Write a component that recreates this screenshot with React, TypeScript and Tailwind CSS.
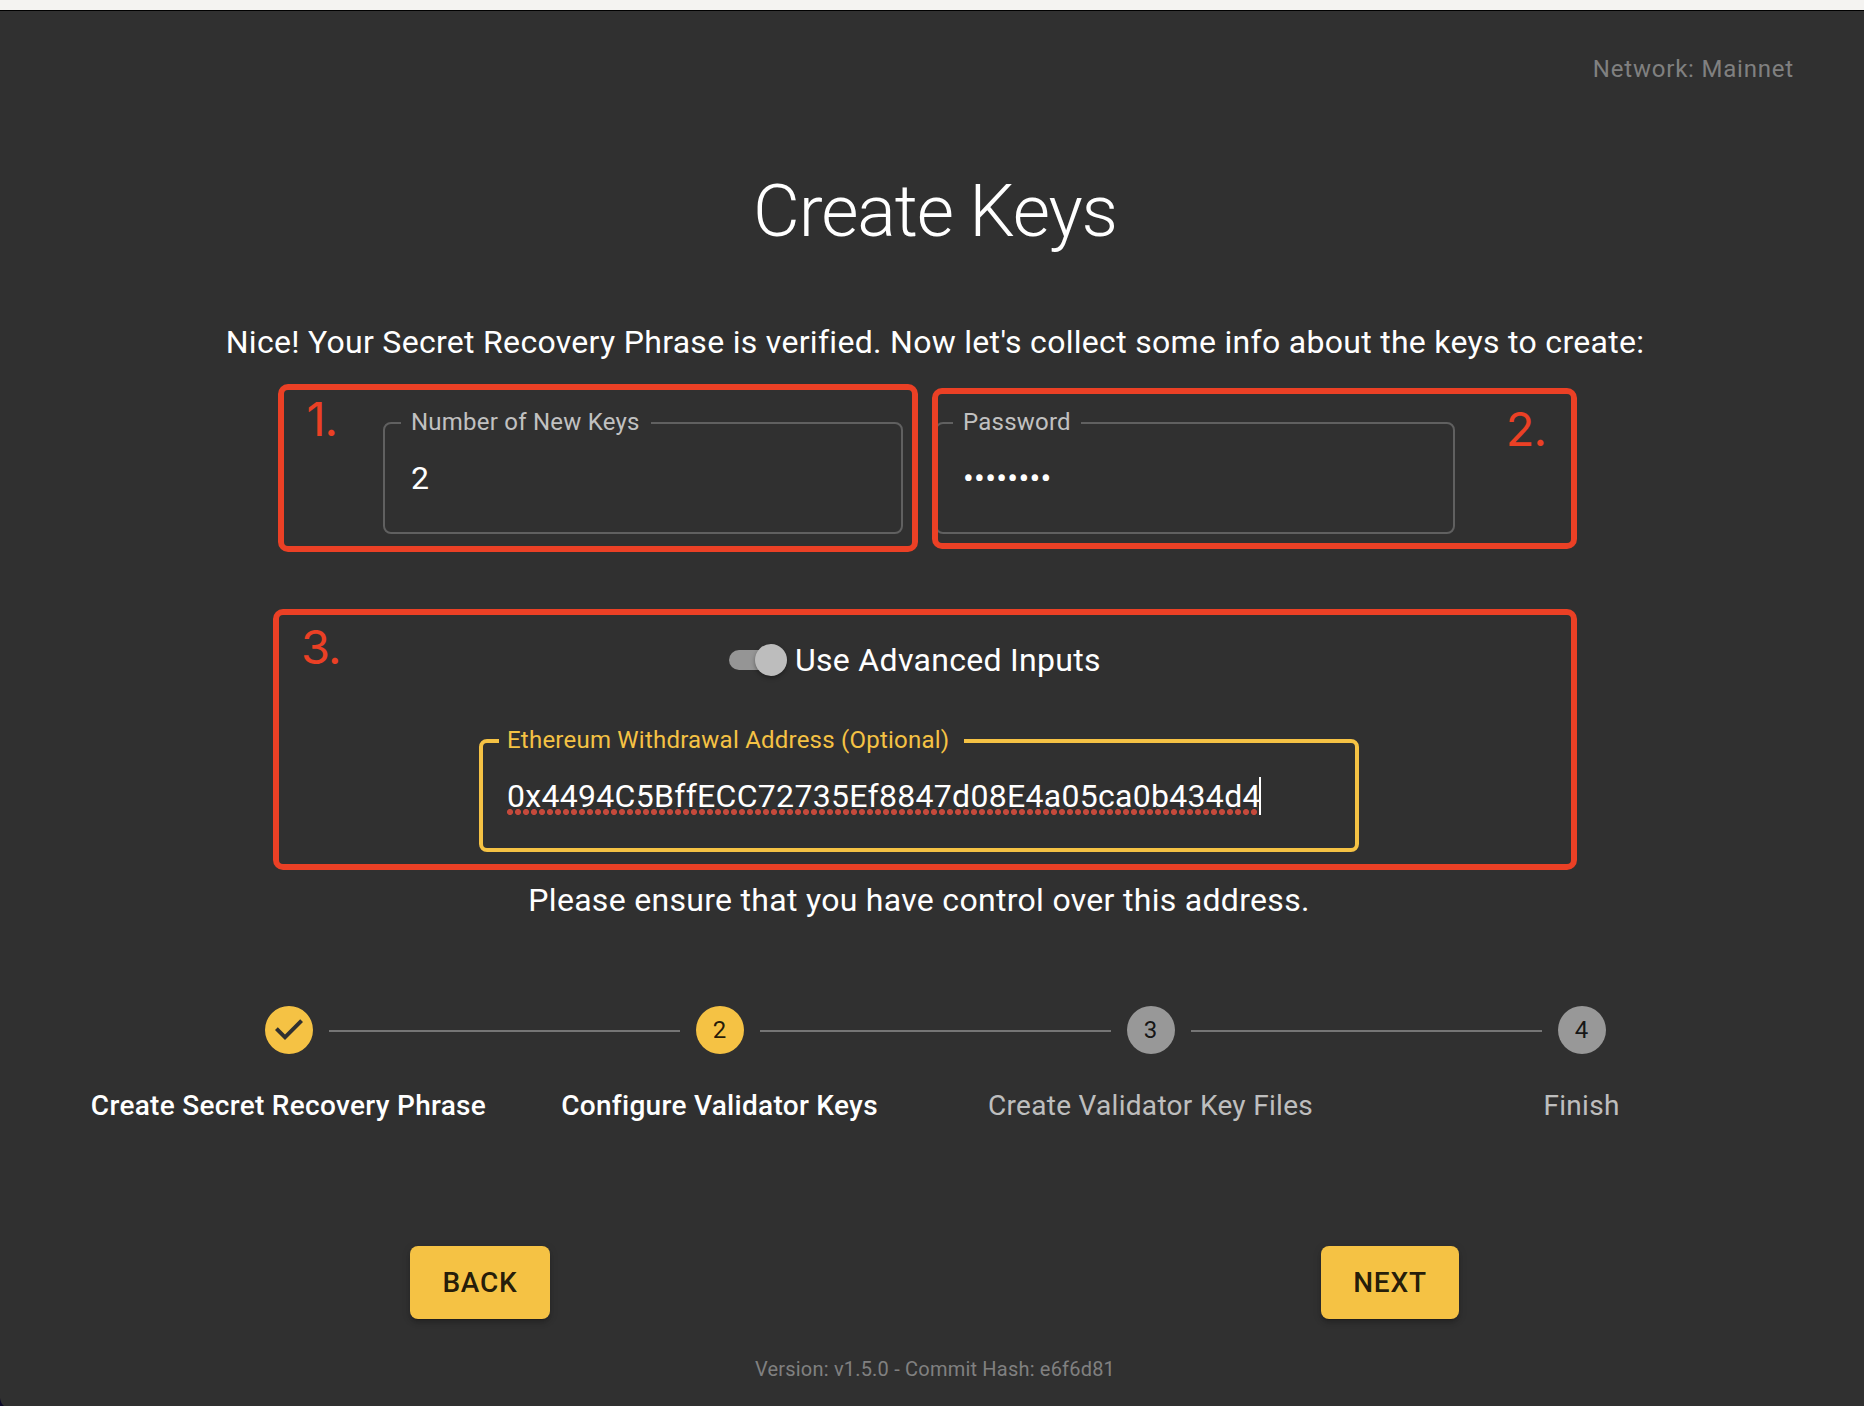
import type { ReactNode } from "react";

function OutlinedField({
  label,
  className,
  labelClassName,
  children,
}: {
  label: string;
  className: string;
  labelClassName: string;
  children: ReactNode;
}) {
  return (
    <div className={`relative flex items-center rounded-lg ${className}`}>
      <span className={`absolute bg-[#303030] text-[24px] leading-7 tracking-[0.225px] whitespace-nowrap ${labelClassName}`}>
        {label}
      </span>
      {children}
    </div>
  );
}

function Annotation({ className, children }: { className: string; children: ReactNode }) {
  return (
    <div
      className={`absolute rounded-[10px] border-[6px] border-[#eb4025] font-['Inter',sans-serif] text-[47px] leading-[48px] font-normal tracking-[-1px] text-[#eb4025] ${className}`}
    >
      {children}
    </div>
  );
}

const steps = [
  { label: "Create Secret Recovery Phrase", state: "done" },
  { label: "Configure Validator Keys", state: "active" },
  { label: "Create Validator Key Files", state: "todo" },
  { label: "Finish", state: "todo" },
];

function StepIcon({ index, state }: { index: number; state: string }) {
  if (state === "done") {
    return (
      <svg viewBox="0 0 24 24" className="size-12 shrink-0 fill-[#f5c244]">
        <path d="M12 0a12 12 0 1 0 0 24 12 12 0 0 0 0-24zm-2 17l-5-5 1.4-1.4 3.6 3.6 7.6-7.6L19 8l-9 9z" />
      </svg>
    );
  }
  return (
    <div
      className={`flex size-12 shrink-0 items-center justify-center rounded-full text-[24px] leading-none text-black/87 ${
        state === "active" ? "bg-[#f5c244]" : "bg-[#989898]"
      }`}
    >
      {index + 1}
    </div>
  );
}

function Stepper() {
  return (
    <div className="mx-auto mt-[82px] grid w-[1724px] grid-cols-4">
      {steps.map((step, i) => (
        <div key={step.label} className="flex flex-col items-center">
          <div className="flex w-full items-center gap-4">
            <div className={`mt-0.5 h-0.5 flex-1 ${i === 0 ? "" : "bg-[#757575]"}`} />
            <StepIcon index={i} state={step.state} />
            <div className={`mt-0.5 h-0.5 flex-1 ${i === steps.length - 1 ? "" : "bg-[#757575]"}`} />
          </div>
          <div
            className={`mt-8 text-[28px] leading-10 tracking-[0.3px] whitespace-nowrap ${
              step.state === "todo" ? "text-white/70" : "font-medium text-white"
            }`}
          >
            {step.label}
          </div>
        </div>
      ))}
    </div>
  );
}

function ActionButton({ className, children }: { className: string; children: ReactNode }) {
  return (
    <button
      className={`h-[73px] rounded-lg bg-[#f5c244] text-[28px] font-medium tracking-[0.8px] text-black/87 shadow-[0_3px_1px_-2px_rgba(0,0,0,0.2),0_4px_4px_0_rgba(0,0,0,0.14),0_2px_10px_0_rgba(0,0,0,0.12)] ${className}`}
    >
      {children}
    </button>
  );
}

export default function App() {
  return (
    <div className="relative h-[1406px] w-[1864px] overflow-hidden bg-[#303030] font-['Roboto',sans-serif] text-white">
      <div className="h-[11px] border-b border-black bg-[#f4f3f1]" />
      <div className="flex w-[1870px] flex-col">
        <header className="flex justify-end pt-10 pr-[76px] text-[24px] leading-9 tracking-[0.8px] text-[#808080]">
          Network: Mainnet
        </header>
        <h1 className="mt-[83px] text-center text-[72px] leading-[84px] font-light tracking-[-1.125px]">Create Keys</h1>
        <p className="mt-16 text-center text-[32px] leading-[48px] tracking-[0.3px]">
          Nice! Your Secret Recovery Phrase is verified. Now let's collect some info about the keys to create:
        </p>

        <section className="relative mt-14 ml-[383px] flex w-[1072px] justify-between">
          <OutlinedField
            label="Number of New Keys"
            className="h-28 w-[520px] border-2 border-[#606060] pl-[26px]"
            labelClassName="-top-4 left-4 pr-[11px] pl-[10px] text-[#c1c1c1]"
          >
            <span className="text-[32px] leading-[38px]">2</span>
          </OutlinedField>
          <OutlinedField
            label="Password"
            className="h-28 w-[520px] border-2 border-[#606060] pl-[26px]"
            labelClassName="-top-4 left-4 pr-[10px] pl-[10px] text-[#c1c1c1]"
          >
            <span className="text-[32px] leading-[38px] tracking-[0.28px]">••••••••</span>
          </OutlinedField>
          <Annotation className="-top-[38px] -left-[105.5px] h-[168px] w-[640.5px] pt-[5px] pl-[23px]">1.</Annotation>
          <Annotation className="-top-[34px] left-[549px] h-[161px] w-[645px] pt-[11px] pr-[25px] text-right">2.</Annotation>
        </section>

        <section className="relative mt-[110px] ml-[479px] w-[880px]">
          <div className="flex h-8 items-center pl-[250px]">
            <div className="flex h-5 w-[52px] items-center rounded-full bg-[#959595]">
              <div className="ml-[26px] size-8 shrink-0 rounded-full bg-[#bdbdbd] shadow-[0_2px_4px_rgba(0,0,0,0.35)]" />
            </div>
            <span className="ml-[14px] text-[32px] leading-[48px] tracking-[0.3px]">Use Advanced Inputs</span>
          </div>
          <OutlinedField
            label="Ethereum Withdrawal Address (Optional)"
            className="mt-[63px] h-[113px] w-full border-4 border-[#f5c244] pl-6"
            labelClassName="-top-[17px] left-4 pr-[15px] pl-2 text-[#f5c244]"
          >
            <span className="relative text-[32px] leading-[38px] tracking-[0.3px]">
              0x4494C5BffECC72735Ef8847d08E4a05ca0b434d4
              <span className="absolute bottom-0 left-0 h-[6px] w-full bg-[radial-gradient(circle_at_3px_3px,#c5493b_2.7px,transparent_3.3px)] bg-[length:8px_6px] bg-repeat-x" />
              <span className="absolute top-0 right-0 h-[38px] w-0.5 bg-white" />
            </span>
          </OutlinedField>
          <Annotation className="-top-[35px] -left-[206px] h-[261px] w-[1304px] pt-2 pl-[22px]">3.</Annotation>
        </section>
        <p className="mt-6 ml-[479px] w-[880px] text-center text-[32px] leading-[48px] tracking-[0.3px]">
          Please ensure that you have control over this address.
        </p>

        <Stepper />

        <div className="mt-[120px] ml-[410px] flex w-[1049px] justify-between">
          <ActionButton className="w-[140px]">BACK</ActionButton>
          <ActionButton className="w-[138px]">NEXT</ActionButton>
        </div>
        <footer className="mt-[35px] text-center text-[20px] leading-[30px] tracking-[0.2px] text-[#808080]">
          Version: v1.5.0 - Commit Hash: e6f6d81
        </footer>
      </div>
      <svg viewBox="0 0 4 8" className="absolute bottom-0 left-0 h-2 w-1 fill-[#0c0a2a]">
        <path d="M0 0Q.5 5 4 8H0z" />
      </svg>
    </div>
  );
}
